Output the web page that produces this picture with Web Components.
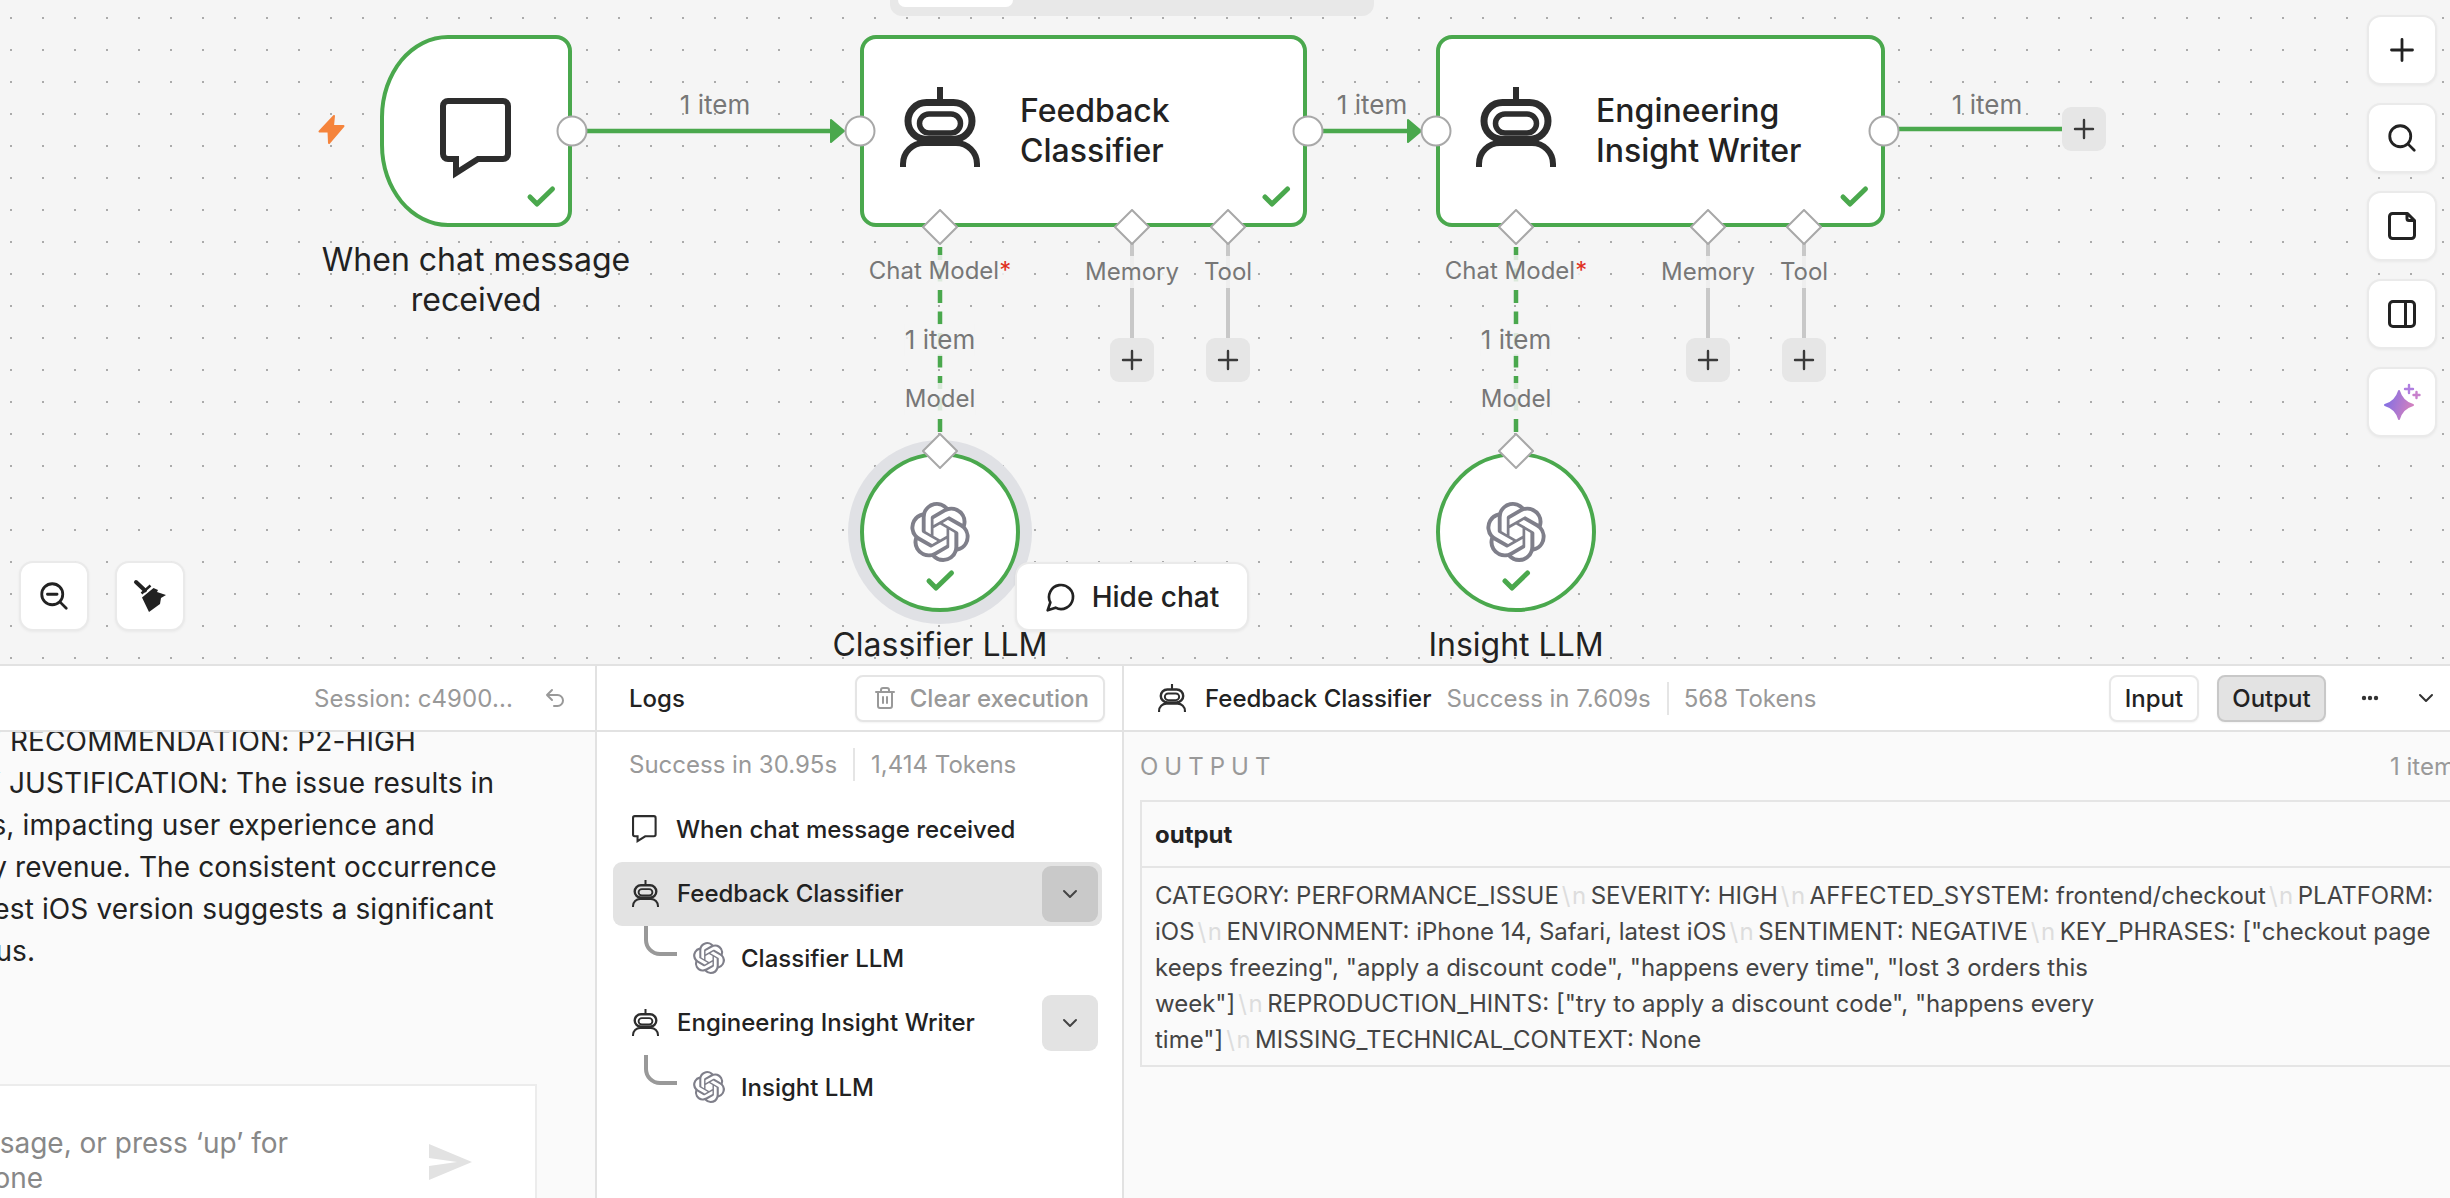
<!DOCTYPE html>
<html>
<head>
<meta charset="utf-8">
<title>Workflow</title>
<style>
	html, body { margin: 0; height: 100%; overflow: hidden; background: #f5f5f5; }
	body { font-family: Inter, "Liberation Sans", sans-serif; color: #222; }
</style>
</head>
<body>
<wf-canvas>
	<wf-tabs></wf-tabs>

	<n-icon name="bolt" w="27" h="29" color="#f5843c" style="position:absolute;left:318px;top:115px"></n-icon>

	<wf-node x="380" y="35" w="192" h="192" kind="trigger" icon="chat" iw="72" ih="80" idy="7"></wf-node>
	<wf-node x="860" y="35" w="447" h="192" icon="robot" iw="80" ih="80" idy="-4">Feedback<br>Classifier</wf-node>
	<wf-node x="1436" y="35" w="449" h="192" icon="robot" iw="80" ih="80" idy="-4">Engineering<br>Insight Writer</wf-node>
	<wf-node x="860" y="452" w="160" h="160" kind="circle" halo icon="openai" iw="60" ih="60" icolor="#7f7f8a"></wf-node>
	<wf-node x="1436" y="452" w="160" h="160" kind="circle" icon="openai" iw="60" ih="60" icolor="#7f7f8a"></wf-node>

	<wf-handle cx="572" cy="131"></wf-handle>
	<wf-handle cx="860" cy="131"></wf-handle>
	<wf-handle cx="1308" cy="131"></wf-handle>
	<wf-handle cx="1436" cy="131"></wf-handle>
	<wf-handle cx="1884" cy="131"></wf-handle>
	<wf-handle cx="940" cy="227" shape="diamond"></wf-handle>
	<wf-handle cx="1132" cy="227" shape="diamond"></wf-handle>
	<wf-handle cx="1228" cy="227" shape="diamond"></wf-handle>
	<wf-handle cx="1516" cy="227" shape="diamond"></wf-handle>
	<wf-handle cx="1708" cy="227" shape="diamond"></wf-handle>
	<wf-handle cx="1804" cy="227" shape="diamond"></wf-handle>
	<wf-handle cx="940" cy="451" shape="diamond"></wf-handle>
	<wf-handle cx="1516" cy="451" shape="diamond"></wf-handle>

	<wf-plus x="2062" y="107"></wf-plus>
	<wf-plus x="1110" y="338"></wf-plus>
	<wf-plus x="1206" y="338"></wf-plus>
	<wf-plus x="1686" y="338"></wf-plus>
	<wf-plus x="1782" y="338"></wf-plus>

	<wf-label cx="476" base="272" size="32" weight="400" color="#222" line="40">When chat message<br>received</wf-label>
	<wf-label cx="940" base="657" size="32" weight="400" color="#222" line="40">Classifier LLM</wf-label>
	<wf-label cx="1516" base="657" size="32" weight="400" color="#222" line="40">Insight LLM</wf-label>

	<wf-label cx="715" base="114" size="26">1 item</wf-label>
	<wf-label cx="1372" base="114" size="26">1 item</wf-label>
	<wf-label cx="1987" base="114" size="26">1 item</wf-label>

	<wf-label cx="940" base="280" cover>Chat Model<span style="color:#e0301e">*</span></wf-label>
	<wf-label cx="1132" base="281" cover>Memory</wf-label>
	<wf-label cx="1228" base="281" cover>Tool</wf-label>
	<wf-label cx="940" base="349" size="26" cover>1 item</wf-label>
	<wf-label cx="940" base="408" cover>Model</wf-label>
	<wf-label cx="1516" base="280" cover>Chat Model<span style="color:#e0301e">*</span></wf-label>
	<wf-label cx="1708" base="281" cover>Memory</wf-label>
	<wf-label cx="1804" base="281" cover>Tool</wf-label>
	<wf-label cx="1516" base="349" size="26" cover>1 item</wf-label>
	<wf-label cx="1516" base="408" cover>Model</wf-label>

	<wf-hide-chat></wf-hide-chat>

	<tool-bar style="left:19px;top:561px;flex-direction:row;gap:26px">
		<tool-btn icon="zoomout"></tool-btn>
		<tool-btn icon="broom"></tool-btn>
	</tool-bar>
	<tool-bar style="left:2367px;top:15px;flex-direction:column;gap:18px">
		<tool-btn icon="plus"></tool-btn>
		<tool-btn icon="search"></tool-btn>
		<tool-btn icon="note"></tool-btn>
		<tool-btn icon="panel"></tool-btn>
		<tool-btn icon="sparkle"></tool-btn>
	</tool-bar>
</wf-canvas>

<panel-row>
	<chat-panel></chat-panel>
	<logs-panel>
		<log-row icon="chat">When chat message received</log-row>
		<log-row icon="robot" expander selected>Feedback Classifier</log-row>
		<log-row icon="openai" child>Classifier LLM</log-row>
		<log-row icon="robot" expander>Engineering Insight Writer</log-row>
		<log-row icon="openai" child>Insight LLM</log-row>
	</logs-panel>
	<details-panel></details-panel>
</panel-row>

<script>
var ICONS = {
	robot: ["0 0 80 80", '<g fill="none" stroke="currentColor" stroke-width="6"><path d="M40 0V14"/><rect x="8" y="15.500" width="64" height="37" rx="18.500" stroke-width="7"/><rect x="19.500" y="27" width="41" height="19" rx="9.500" stroke-width="5.500"/><path d="M3 80V77A21 21 0 0 1 24 56H56A21 21 0 0 1 77 77V80"/></g>'],
	chat: ["0 0 72 80", '<path fill="none" stroke="currentColor" stroke-width="6" d="M8 3H63a5 5 0 0 1 5 5V56a5 5 0 0 1-5 5H38L16 75V61H8a5 5 0 0 1-5-5V8a5 5 0 0 1 5-5Z"/>'],
	bolt: ["0 0 27 29", '<path fill="currentColor" stroke="currentColor" stroke-width="2" stroke-linejoin="round" d="M16 1L1.5 16.500H10.500L11 28L25.500 11H15Z"/>'],
	check: ["0 0 28 21", '<path fill="none" stroke="currentColor" stroke-width="5" stroke-linecap="round" stroke-linejoin="round" d="M3 11L10 18L25.500 3"/>'],
	openai: ["0 0 24 24", '<path fill="currentColor" d="M22.2819 9.8211a5.9847 5.9847 0 0 0-.5157-4.9108 6.0462 6.0462 0 0 0-6.5098-2.9A6.0651 6.0651 0 0 0 4.9807 4.1818a5.9847 5.9847 0 0 0-3.9977 2.9 6.0462 6.0462 0 0 0 .7427 7.0966 5.98 5.98 0 0 0 .511 4.9107 6.051 6.051 0 0 0 6.5146 2.9001A5.9847 5.9847 0 0 0 13.2599 24a6.0557 6.0557 0 0 0 5.7718-4.2058 5.9894 5.9894 0 0 0 3.9977-2.9001 6.0557 6.0557 0 0 0-.7475-7.0729zm-9.022 12.6081a4.4755 4.4755 0 0 1-2.8764-1.0408l.1419-.0804 4.7783-2.7582a.7948.7948 0 0 0 .3927-.6813v-6.7369l2.02 1.1686a.071.071 0 0 1 .038.052v5.5826a4.504 4.504 0 0 1-4.4945 4.4944zm-9.6607-4.1254a4.4708 4.4708 0 0 1-.5346-3.0137l.142.0852 4.783 2.7582a.7712.7712 0 0 0 .7806 0l5.8428-3.3685v2.3324a.0804.0804 0 0 1-.0332.0615L9.74 19.9502a4.4992 4.4992 0 0 1-6.1408-1.6464zM2.3408 7.8956a4.485 4.485 0 0 1 2.3655-1.9728V11.6a.7664.7664 0 0 0 .3879.6765l5.8144 3.3543-2.0201 1.1685a.0757.0757 0 0 1-.071 0l-4.8303-2.7865A4.504 4.504 0 0 1 2.3408 7.872zm16.5963 3.8558L13.1038 8.364 15.1192 7.2a.0757.0757 0 0 1 .071 0l4.8303 2.7913a4.4944 4.4944 0 0 1-.6765 8.1042v-5.6772a.79.79 0 0 0-.407-.667zm2.0107-3.0231l-.142-.0852-4.7735-2.7818a.7759.7759 0 0 0-.7854 0L9.409 9.2297V6.8974a.0662.0662 0 0 1 .0284-.0615l4.8303-2.7866a4.4992 4.4992 0 0 1 6.6802 4.66zM8.3065 12.863l-2.02-1.1638a.0804.0804 0 0 1-.038-.0567V6.0742a4.4992 4.4992 0 0 1 7.3757-3.4537l-.142.0805L8.704 5.459a.7948.7948 0 0 0-.3927.6813zm1.0976-2.3654l2.602-1.4998 2.6069 1.4998v2.9994l-2.5974 1.4997-2.6067-1.4997Z"/>'],
	plus: ["0 0 24 24", '<path fill="none" stroke="currentColor" stroke-width="2.400" stroke-linecap="round" d="M3 12H21M12 3V21"/>'],
	search: ["0 0 32 32", '<circle cx="14" cy="14" r="12" fill="none" stroke="currentColor" stroke-width="3.200"/><path d="M23 23L30 30" stroke="currentColor" stroke-width="3.200" stroke-linecap="round"/>'],
	zoomout: ["0 0 32 32", '<circle cx="14" cy="14" r="12" fill="none" stroke="currentColor" stroke-width="3.200"/><path d="M23 23L30 30M8.500 14H19.500" stroke="currentColor" stroke-width="3.200" stroke-linecap="round"/>'],
	note: ["0 0 28 28", '<path fill="none" stroke="currentColor" stroke-width="3" stroke-linejoin="round" d="M4.500 1.500H19.500L26.500 8.500V23.500a3 3 0 0 1-3 3H4.500a3 3 0 0 1-3-3V4.500a3 3 0 0 1 3-3ZM19 1.500V6.500a2 2 0 0 0 2 2H26.500"/>'],
	panel: ["0 0 28 28", '<rect x="1.500" y="1.500" width="25" height="25" rx="3.500" fill="none" stroke="currentColor" stroke-width="3"/><path d="M17.500 1.500V26.500" stroke="currentColor" stroke-width="3"/>'],
	sparkle: ["0 0 36 36", '<defs><linearGradient id="sp" x1="0" y1="0" x2="1" y2="0.300"><stop offset="0" stop-color="#7a6ee8"/><stop offset="1" stop-color="#cf7fc0"/></linearGradient></defs><path fill="url(#sp)" stroke="url(#sp)" stroke-width="2" stroke-linejoin="round" d="M15 7C17 14 22 19 29 21C22 23 17 28 15 35C13 28 8 23 1 21C8 19 13 14 15 7Z"/><path d="M25 1V9M21 5H29" stroke="#b07fe0" stroke-width="2.400" stroke-linecap="round"/><path d="M32.500 8V14M29.500 11H35.500" stroke="#c880cc" stroke-width="2.400" stroke-linecap="round"/>'],
	broom: ["0 0 32 32", '<path d="M2 2L11 10.500" stroke="currentColor" stroke-width="4" stroke-linecap="round"/><path d="M7.500 13.500L16.500 5.500" stroke="currentColor" stroke-width="2.500"/><path fill="currentColor" d="M8 17.500L19.500 8L24 10L23 12L32 15L27 18L26 24L15 32Z"/>'],
	bubble: ["0 0 24 24", '<path fill="none" stroke="currentColor" stroke-width="2" stroke-linejoin="round" d="M7.900 20A9 9 0 1 0 4 16.100L2 22Z"/>'],
	undo: ["0 0 24 24", '<path fill="none" stroke="currentColor" stroke-width="2" stroke-linecap="round" stroke-linejoin="round" d="M9 14L4 9L9 4M4 9H14.500A5.500 5.500 0 0 1 14.500 20H11"/>'],
	trash: ["0 0 24 24", '<path fill="none" stroke="currentColor" stroke-width="2" stroke-linecap="round" stroke-linejoin="round" d="M3 6H21M19 6V20C19 21 18 22 17 22H7C6 22 5 21 5 20V6M8 6V4C8 3 9 2 10 2H14C15 2 16 3 16 4V6M10 11V17M14 11V17"/>'],
	chevron: ["0 0 24 24", '<path fill="none" stroke="currentColor" stroke-width="2" stroke-linecap="round" stroke-linejoin="round" d="M6 9L12 15L18 9"/>'],
	dots: ["0 0 18 6", '<circle cx="3" cy="3" r="2.200" fill="currentColor"/><circle cx="9" cy="3" r="2.200" fill="currentColor"/><circle cx="15" cy="3" r="2.200" fill="currentColor"/>'],
	send: ["0 0 43 36", '<path fill="currentColor" d="M0 0L43 18L0 36V22L28 18L0 14Z"/>']
};

class NIcon extends HTMLElement {
	connectedCallback() {
		var shadow = this.attachShadow({mode: "open"});
		var icon = ICONS[this.getAttribute("name")];
		var w = this.getAttribute("w") || 24;
		var h = this.getAttribute("h") || w;
		var color = this.getAttribute("color") || "currentColor";
		shadow.innerHTML = "<style>:host { display: block; flex: none; width: " + w + "px; height: " + h + "px; color: " + color + "; } svg { display: block; width: 100%; height: 100%; overflow: visible; }</style>" +
			'<svg viewBox="' + icon[0] + '">' + icon[1] + "</svg>";
	}
}
customElements.define("n-icon", NIcon);

class WfCanvas extends HTMLElement {
	connectedCallback() {
		var shadow = this.attachShadow({mode: "open"});
		var dash = 'stroke="#4aa84d" stroke-width="4.500" stroke-dasharray="13 8.500"';
		var solid = 'stroke="#4aa84d" stroke-width="4.500"';
		var grey = 'stroke="#c8c8c8" stroke-width="4"';
		var arrow = 'fill="#4aa84d" stroke="#4aa84d" stroke-width="2" stroke-linejoin="round"';
		shadow.innerHTML = `<style>
			:host { display: block; position: relative; height: 664px; overflow: hidden; background-color: #f5f5f5;
				background-image: radial-gradient(circle, #ababab 1px, transparent 1.300px); background-size: 32px 32px; background-position: -5px 2px; }
			svg { position: absolute; left: 0; top: 0; }
		</style>
		<svg width="2450" height="664">
			<path d="M587 131H832" ${solid}/><path d="M831 120L844 131L831 142Z" ${arrow}/>
			<path d="M1323 131H1409" ${solid}/><path d="M1408 120L1421 131L1408 142Z" ${arrow}/>
			<path d="M1899 129H2062" ${solid}/>
			<path d="M940 247V433" ${dash}/><path d="M1516 247V433" ${dash}/>
			<path d="M1132 243V338M1228 243V338M1708 243V338M1804 243V338" ${grey}/>
		</svg>
		<slot></slot>`;
	}
}
customElements.define("wf-canvas", WfCanvas);

class WfTabs extends HTMLElement {
	connectedCallback() {
		this.attachShadow({mode: "open"}).innerHTML = `<style>
			:host { position: absolute; left: 890px; top: 0; width: 484px; height: 16px; background: #e8e8e8; border-radius: 0 0 12px 12px; }
			div { margin-left: 8px; width: 115px; height: 7px; background: #fff; border-radius: 0 0 8px 8px; }
		</style><div></div>`;
	}
}
customElements.define("wf-tabs", WfTabs);

class WfNode extends HTMLElement {
	connectedCallback() {
		var shadow = this.attachShadow({mode: "open"});
		var kind = this.getAttribute("kind") || "action";
		var a = name => this.getAttribute(name);
		var radius = kind == "circle" ? "50%" : kind == "trigger" ? "68px 16px 16px 68px / 82px 16px 16px 82px" : "16px";
		var check = kind == "circle" ? "left: 50%; margin-left: -14px; bottom: 17px;" : "right: 13px; bottom: 16px;";
		shadow.innerHTML = `<style>
			:host { position: absolute; left: ${a("x")}px; top: ${a("y")}px; width: ${a("w")}px; height: ${a("h")}px; box-sizing: border-box;
				display: flex; align-items: center; justify-content: ${kind == "action" ? "flex-start" : "center"}; gap: 40px;
				padding-left: ${kind == "action" ? 36 : 0}px; background: #fff; border: 4px solid #4aa84d; border-radius: ${radius};
				${this.hasAttribute("halo") ? "box-shadow: 0 0 0 12px #e0e1e5;" : ""} }
			.title { font-size: 32px; line-height: 40px; font-weight: 500; color: #222; }
			.check { position: absolute; ${check} }
			.icon { transform: translateY(${a("idy") || 0}px); }
		</style>
		<n-icon class="icon" name="${a("icon")}" w="${a("iw")}" h="${a("ih")}" color="${a("icolor") || "#2d2d2d"}"></n-icon>
		<div class="title"><slot></slot></div>
		<n-icon class="check" name="check" w="28" h="21" color="#4aa84d"></n-icon>`;
		if (kind != "action") shadow.querySelector(".title").remove();
	}
}
customElements.define("wf-node", WfNode);

class WfHandle extends HTMLElement {
	connectedCallback() {
		var shadow = this.attachShadow({mode: "open"});
		var cx = +this.getAttribute("cx");
		var cy = +this.getAttribute("cy");
		var diamond = this.getAttribute("shape") == "diamond";
		var size = diamond ? 36 : 32;
		var shape = diamond ? '<polygon points="18,1 35,18 18,35 1,18" fill="#fff" stroke="#a8a8a8" stroke-width="2"/>'
			: '<circle cx="16" cy="16" r="14.500" fill="#fff" stroke="#a8a8a8" stroke-width="2"/>';
		shadow.innerHTML = `<style>:host { position: absolute; left: ${cx - size / 2}px; top: ${cy - size / 2}px; width: ${size}px; height: ${size}px; } svg { display: block; }</style>
			<svg width="${size}" height="${size}">${shape}</svg>`;
	}
}
customElements.define("wf-handle", WfHandle);

class WfPlus extends HTMLElement {
	connectedCallback() {
		this.attachShadow({mode: "open"}).innerHTML = `<style>
			:host { position: absolute; left: ${this.getAttribute("x")}px; top: ${this.getAttribute("y")}px; width: 44px; height: 44px; display: flex; align-items: center; justify-content: center; background: #e6e6e6; border-radius: 9px; }
		</style><n-icon name="plus" w="24" color="#3a3a3a"></n-icon>`;
	}
}
customElements.define("wf-plus", WfPlus);

class WfLabel extends HTMLElement {
	connectedCallback() {
		var shadow = this.attachShadow({mode: "open"});
		var size = +(this.getAttribute("size") || 24);
		var line = +(this.getAttribute("line") || 32);
		var base = +this.getAttribute("base");
		// baseline inside the first line box, from Inter's ascent and descent
		var top = base - ((line - size * 1.21) / 2 + size * 0.969);
		shadow.innerHTML = `<style>
			:host { position: absolute; left: ${this.getAttribute("cx")}px; top: ${top}px; transform: translateX(-50%); white-space: nowrap; text-align: center;
				font-size: ${size}px; line-height: ${line}px; font-weight: ${this.getAttribute("weight") || 400}; color: ${this.getAttribute("color") || "#777"};
				${this.hasAttribute("cover") ? "background: rgba(245,245,245,.85);" : ""} }
		</style><slot></slot>`;
	}
}
customElements.define("wf-label", WfLabel);

class WfHideChat extends HTMLElement {
	connectedCallback() {
		this.attachShadow({mode: "open"}).innerHTML = `<style>
			:host { position: absolute; left: 1015px; top: 562px; width: 234px; height: 69px; box-sizing: border-box; display: flex; align-items: center; justify-content: center; gap: 15px;
				background: #fff; border: 2px solid #eaeaea; border-radius: 14px; box-shadow: 0 1px 3px rgba(0,0,0,.06); font-size: 28px; font-weight: 500; color: #222; }
		</style><n-icon name="bubble" w="32" color="#222"></n-icon><span>Hide chat</span>`;
	}
}
customElements.define("wf-hide-chat", WfHideChat);

class ToolBar extends HTMLElement {
	connectedCallback() {
		this.attachShadow({mode: "open"}).innerHTML = "<style>:host { position: absolute; display: flex; }</style><slot></slot>";
	}
}
customElements.define("tool-bar", ToolBar);

class ToolBtn extends HTMLElement {
	connectedCallback() {
		var name = this.getAttribute("icon");
		var size = {plus: 28, search: 28, zoomout: 28, note: 28, panel: 28, sparkle: 36, broom: 32}[name];
		this.attachShadow({mode: "open"}).innerHTML = `<style>
			:host { display: flex; align-items: center; justify-content: center; width: 70px; height: 70px; box-sizing: border-box;
				background: #fff; border: 2px solid #eaeaea; border-radius: 14px; box-shadow: 0 1px 3px rgba(0,0,0,.05); }
		</style><n-icon name="${name}" w="${size}" color="#222"></n-icon>`;
	}
}
customElements.define("tool-btn", ToolBtn);

class PanelRow extends HTMLElement {
	connectedCallback() {
		this.attachShadow({mode: "open"}).innerHTML = "<style>:host { display: flex; height: 532px; border-top: 2px solid #e2e2e2; overflow: hidden; background: #fff; }</style><slot></slot>";
	}
}
customElements.define("panel-row", PanelRow);

class ChatPanel extends HTMLElement {
	connectedCallback() {
		var lines = [
			[-127, "PRIORITY RECOMMENDATION: P2-HIGH"],
			[-128, "PRIORITY JUSTIFICATION: The issue results in"],
			[-136, "lost orders, impacting user experience and"],
			[-92, "directly revenue. The consistent occurrence"],
			[-80, "on latest iOS version suggests a significant"],
			[-54, "status."]
		];
		var html = lines.map(l => `<div style="margin-left:${l[0]}px">${l[1]}</div>`).join("");
		this.attachShadow({mode: "open"}).innerHTML = `<style>
			:host { display: flex; flex-direction: column; flex: none; width: 597px; box-sizing: border-box; border-right: 2px solid #e2e2e2; background: #fafafa; overflow: hidden; }
			.head { display: flex; flex: none; align-items: center; justify-content: flex-end; gap: 30px; height: 64px; padding-right: 28px; background: #fff; border-bottom: 2px solid #e2e2e2; font-size: 24px; letter-spacing: .1px; color: #999; }
			.body { flex: 1; overflow: hidden; }
			.msg { margin-top: -12px; font-size: 28px; line-height: 42px; letter-spacing: .12px; color: #222; white-space: nowrap; }
			.input { flex: none; display: flex; height: 114px; margin-right: 58px; box-sizing: border-box; background: #fff; border: 2px solid #ececec; border-left: 0; border-bottom: 0; font-size: 28px; line-height: 35px; color: #888; white-space: nowrap; }
			.text { flex: 1; padding-top: 40px; }
			.input n-icon { margin: 58px 63px 0 0; }
		</style>
		<div class="head"><span>Session: c4900...</span><n-icon name="undo" w="24" color="#999"></n-icon></div>
		<div class="body"><div class="msg">${html}</div></div>
		<div class="input">
			<div class="text"><div style="margin-left:-153px">Type a message, or press ‘up’ for</div><div style="margin-left:-128px">previous one</div></div>
			<n-icon name="send" w="43" h="36" color="#e2e2e2"></n-icon>
		</div>`;
	}
}
customElements.define("chat-panel", ChatPanel);

class LogsPanel extends HTMLElement {
	connectedCallback() {
		this.attachShadow({mode: "open"}).innerHTML = `<style>
			:host { display: block; flex: none; width: 527px; box-sizing: border-box; border-right: 2px solid #e2e2e2; background: #fff; }
			.head { display: flex; align-items: center; justify-content: space-between; height: 64px; padding: 0 17px 0 32px; border-bottom: 2px solid #e2e2e2; font-size: 24px; font-weight: 500; color: #222; }
			.clear { display: flex; align-items: center; gap: 13px; height: 47px; box-sizing: border-box; padding: 0 14px 0 16px; background: #fff; border: 2px solid #e5e5e5; border-radius: 8px; box-shadow: 0 1px 2px rgba(0,0,0,.05); color: #999; }
			.sum { display: flex; align-items: center; height: 32px; margin: 16px 0 17px; padding-left: 32px; font-size: 24px; color: #999; }
			.sep { width: 2px; height: 33px; margin: 0 16px; background: #e5e5e5; }
		</style>
		<div class="head"><span>Logs</span><div class="clear"><n-icon name="trash" w="24" color="#999"></n-icon><span>Clear execution</span></div></div>
		<div class="sum"><span>Success in 30.95s</span><div class="sep"></div><span>1,414 Tokens</span></div>
		<slot></slot>`;
	}
}
customElements.define("logs-panel", LogsPanel);

class LogRow extends HTMLElement {
	connectedCallback() {
		var shadow = this.attachShadow({mode: "open"});
		var name = this.getAttribute("icon");
		var child = this.hasAttribute("child");
		var selected = this.hasAttribute("selected");
		var icon = name == "openai" ? '<n-icon name="openai" w="32" color="#7f7f8a"></n-icon>' :
			name == "chat" ? '<n-icon name="chat" w="25" h="28" color="#2d2d2d"></n-icon>' : '<n-icon name="robot" w="27" color="#2d2d2d"></n-icon>';
		var elbow = child ? '<svg class="elbow" width="33" height="32"><path d="M2 0V14A14 14 0 0 0 16 28H33" fill="none" stroke="#999" stroke-width="4"/></svg>' : "";
		var expander = this.hasAttribute("expander") ? `<div class="exp"><n-icon name="chevron" w="24" color="#444"></n-icon></div>` : "";
		shadow.innerHTML = `<style>
			:host { display: flex; align-items: center; height: 64.500px; width: 489px; margin-left: 16px; box-sizing: border-box; position: relative;
				padding-left: ${child ? 31 : 19}px; border-radius: 9px; background: ${selected ? "#e3e3e3" : "transparent"}; font-size: 24px; font-weight: 500; color: #222; }
			.elbow { align-self: flex-start; flex: none; margin-right: 16px; }
			.label { margin-left: ${child ? 16 : name == "chat" ? 19 : 18}px; }
			.exp { display: flex; align-items: center; justify-content: center; width: 56px; height: 56px; margin-left: auto; margin-right: 4px; border-radius: 9px; background: ${selected ? "#c9c9c9" : "#e3e3e3"}; }
		</style>${elbow}${icon}<span class="label"><slot></slot></span>${expander}`;
	}
}
customElements.define("log-row", LogRow);

class DetailsPanel extends HTMLElement {
	connectedCallback() {
		var nl = '<span class="nl">\\n</span>';
		this.attachShadow({mode: "open"}).innerHTML = `<style>
			:host { display: flex; flex-direction: column; flex: 1; min-width: 0; background: #fafafa; overflow: hidden; font-size: 24px; }
			.head { display: flex; flex: none; align-items: center; height: 64px; padding-left: 34px; background: #fff; border-bottom: 2px solid #e2e2e2; color: #999; white-space: nowrap; }
			.name { margin: 0 15px 0 19px; font-weight: 500; color: #222; }
			.sep { width: 2px; height: 33px; margin: 0 15px 0 16px; background: #e5e5e5; }
			.btn { height: 47px; box-sizing: border-box; display: flex; align-items: center; justify-content: center; background: #fff; border: 2px solid #e8e8e8; border-radius: 8px; box-shadow: 0 1px 2px rgba(0,0,0,.05); font-weight: 500; color: #222; }
			.in { width: 90px; margin-left: auto; }
			.out { width: 109px; margin-left: 18px; background: #e3e3e3; border-color: #c8c8c8; }
			.dots { margin-left: 35px; }
			.more { margin: 0 12px 0 35px; }
			.sub { display: flex; flex: none; justify-content: space-between; align-items: center; width: 1315px; height: 32px; margin: 18px 0 0 16px; color: #999; }
			.cap { letter-spacing: 6px; }
			table { flex: none; width: 1450px; margin: 18px 0 0 16px; box-sizing: border-box; border-collapse: separate; border-spacing: 0; border: 2px solid #e5e5e5; color: #444; }
			th { height: 66px; padding: 0 0 0 13px; text-align: left; font-weight: 700; color: #222; border-bottom: 2px solid #e5e5e5; box-sizing: border-box; }
			td { padding: 10px 0 7px 13px; line-height: 36px; white-space: nowrap; }
			.nl { padding: 0 3px; letter-spacing: 1.500px; color: #ddd; }
		</style>
		<div class="head">
			<n-icon name="robot" w="28" color="#2d2d2d"></n-icon>
			<span class="name">Feedback Classifier</span><span>Success in 7.609s</span><div class="sep"></div><span>568 Tokens</span>
			<div class="btn in">Input</div><div class="btn out">Output</div>
			<n-icon class="dots" name="dots" w="18" h="6" color="#333"></n-icon>
			<n-icon class="more" name="chevron" w="24" color="#333"></n-icon>
		</div>
		<div class="sub"><span class="cap">OUTPUT</span><span>1 item</span></div>
		<table><tr><th>output</th></tr><tr><td>
			CATEGORY: PERFORMANCE_ISSUE${nl}SEVERITY: HIGH${nl}AFFECTED_SYSTEM: frontend/checkout${nl}PLATFORM:<br>
			iOS${nl}ENVIRONMENT: iPhone 14, Safari, latest iOS${nl}SENTIMENT: NEGATIVE${nl}KEY_PHRASES: ["checkout page<br>
			keeps freezing", "apply a discount code", "happens every time", "lost 3 orders this<br>
			week"]${nl}REPRODUCTION_HINTS: ["try to apply a discount code", "happens every<br>
			time"]${nl}MISSING_TECHNICAL_CONTEXT: None
		</td></tr></table>`;
	}
}
customElements.define("details-panel", DetailsPanel);
</script>
</body>
</html>
